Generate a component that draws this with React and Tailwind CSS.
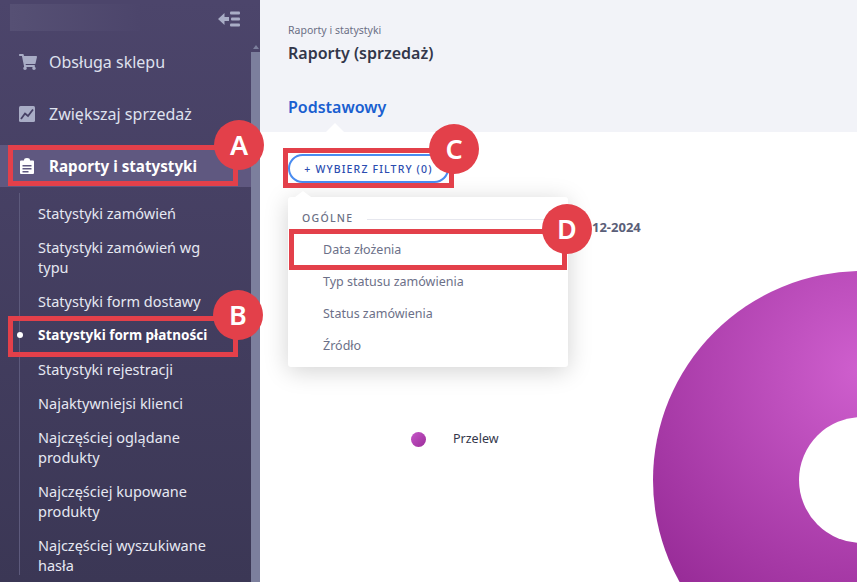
import React from 'react';
import { FaShoppingCart } from 'react-icons/fa';

const subItems = [
  { label: 'Statystyki zamówień' },
  { label: 'Statystyki zamówień wg typu' },
  { label: 'Statystyki form dostawy' },
  { label: 'Statystyki form płatności', active: true },
  { label: 'Statystyki rejestracji' },
  { label: 'Najaktywniejsi klienci' },
  { label: 'Najczęściej oglądane produkty' },
  { label: 'Najczęściej kupowane produkty' },
  { label: 'Najczęściej wyszukiwane hasła' },
];

const filters = ['Data złożenia', 'Typ statusu zamówienia', 'Status zamówienia', 'Źródło'];

const CollapseIcon = () => (
  <svg width="22" height="16" viewBox="0 0 22 16" fill="#a9adc6">
    <path d="M0 8 L6.5 2 V6 H11 V10 H6.5 V14 Z" />
    <rect x="12" y="0.5" width="10" height="3" rx="1" />
    <rect x="13" y="6.5" width="9" height="3" rx="1" />
    <rect x="12" y="12.5" width="10" height="3" rx="1" />
  </svg>
);

const TrendIcon = () => (
  <svg width="16" height="16" viewBox="0 0 16 16">
    <rect width="16" height="16" rx="1.5" fill="#a9adc6" />
    <path d="M2 13 L6 7.5 L9 10 L14 3.5" fill="none" stroke="#474166" strokeWidth="1.8" />
  </svg>
);

const ClipboardIcon = () => (
  <svg width="16" height="16" viewBox="0 0 16 16">
    <path d="M1 3.5 A1 1 0 0 1 2 2.5 H5 A3 2.4 0 0 1 11 2.5 H14 A1 1 0 0 1 15 3.5 V15 A1 1 0 0 1 14 16 H2 A1 1 0 0 1 1 15 Z" fill="#fff" />
    <rect x="3.5" y="7" width="9" height="1.5" fill="#5f5880" />
    <rect x="3.5" y="10" width="9" height="1.5" fill="#5f5880" />
    <rect x="3.5" y="13" width="6" height="1.5" fill="#5f5880" />
  </svg>
);

const Marker = ({ letter, className }) => (
  <div className={`absolute w-[50px] h-[50px] rounded-full bg-[#e3404a] text-white flex items-center justify-center text-[27px] font-semibold ${className}`}>
    {letter}
  </div>
);

const Box = ({ className }) => (
  <div className={`absolute border-[5px] border-[#e3404a] ${className}`} />
);

const App = () => {
  return (
    <div className="relative flex w-[857px] h-[582px] overflow-hidden bg-white text-[#33374a] font-['Noto_Sans','Open_Sans',sans-serif]">
      {/* Sidebar */}
      <aside className="relative w-[260px] h-full shrink-0 overflow-hidden bg-gradient-to-b from-[#4c456b] to-[#3b3755] text-[#dfe1ee]">
        <div className="flex items-start justify-between h-[36px] pl-[10px] pr-[20px] pt-[4px]">
          <div className="w-[130px] h-[27px] bg-gradient-to-r from-[#565074] to-[#4c456b]" />
          <div className="pt-[7px]"><CollapseIcon /></div>
        </div>

        <nav className="pr-[9px]">
          <div className="flex items-center h-[52px] pl-[19px] gap-[12px] text-[16px]">
            <FaShoppingCart className="w-[18px] h-[16px] text-[#a9adc6]" />
            <span>Obsługa sklepu</span>
          </div>
          <div className="flex items-center h-[52px] pl-[19px] gap-[14px] text-[16px]">
            <TrendIcon />
            <span>Zwiększaj sprzedaż</span>
          </div>
          <div className="flex items-center h-[42px] mt-[5px] mb-[5px] pl-[19px] gap-[14px] text-[15.2px] font-bold text-white bg-[#5f5880]">
            <ClipboardIcon />
            <span>Raporty i statystyki</span>
          </div>

          <ul className="relative ml-[19px] mt-[6px] pt-[10px] pl-[18px] pr-[20px] flex flex-col gap-[14px] border-l border-[#5d5a7c] text-[14.5px] leading-[20px] text-[#e6e8f2]">
            {subItems.map((item) => (
              <li key={item.label} className={`relative ${item.active ? 'font-bold text-[13.5px] text-white' : ''}`}>
                {item.active && (
                  <span className="absolute left-[-21px] top-[7px] w-[6px] h-[6px] rounded-full bg-white" />
                )}
                {item.label}
              </li>
            ))}
          </ul>
        </nav>

        {/* scrollbar */}
        <div className="absolute right-0 top-[45px] bottom-0 w-[9px] flex flex-col items-center">
          <div className="w-0 h-0 border-x-[3px] border-x-transparent border-b-[4px] border-b-[#7c7f9d]" />
          <div className="w-full flex-1 mt-[3px] bg-[#7c7f9d]" />
        </div>
      </aside>

      {/* Main */}
      <main className="relative flex-1 flex flex-col">
        <header className="relative h-[132px] shrink-0 bg-[#f2f3f8] pl-[28px] pt-[22px]">
          <div className="text-[10.5px] leading-[16px] text-[#6b6f85]">Raporty i statystyki</div>
          <h1 className="mt-[4px] text-[16px] leading-[22px] font-semibold text-[#33374a]">Raporty (sprzedaż)</h1>
          <div className="mt-[32px] text-[16px] leading-[22px] font-semibold text-[#1a5fd0]">Podstawowy</div>
          <div className="absolute left-[66px] bottom-0 w-0 h-0 border-x-[9px] border-x-transparent border-b-[9px] border-b-white" />
        </header>

        <section className="relative flex-1 pl-[28px] pt-[22px]">
          <button className="flex items-center justify-center w-[161px] h-[29px] pt-[2px] rounded-full border-2 border-[#4a8cf0] bg-white text-[10.5px] font-medium tracking-[0.11em] text-[#2b4cb0]">
            + WYBIERZ FILTRY (0)
          </button>

          <div className="absolute left-[332px] top-[86px] text-[13px] font-bold text-[#5a5e78]">12-2024</div>

          <div className="absolute left-[151px] top-[298px] flex items-center gap-[27px]">
            <span className="w-[15px] h-[15px] rounded-full bg-gradient-to-br from-[#c657c9] to-[#9c2c9a]" />
            <span className="text-[12.5px] text-[#33374a]">Przelew</span>
          </div>

          {/* pie chart */}
          <svg className="absolute left-[393px] top-[139px]" width="204" height="311" viewBox="653 271 204 311">
            <defs>
              <radialGradient id="pie" gradientUnits="userSpaceOnUse" cx="862" cy="370" r="290">
                <stop offset="0" stopColor="#cf5fce" />
                <stop offset="1" stopColor="#962a96" />
              </radialGradient>
            </defs>
            <circle cx="862" cy="480" r="209" fill="url(#pie)" />
            <circle cx="862" cy="480" r="63" fill="#fff" />
          </svg>

          {/* filter dropdown */}
          <div className="absolute left-[28px] top-[65px] w-[280px] h-[170px] bg-white rounded-[3px] shadow-[0_4px_24px_rgba(0,0,0,0.18)]">
            <div className="absolute left-[7px] top-[-6px] w-0 h-0 border-x-[8px] border-x-transparent border-b-[6px] border-b-white" />
            <div className="flex items-center h-[16px] mt-[14px] pl-[14px] pr-[13px] gap-[14px]">
              <span className="text-[10.5px] font-medium tracking-[0.12em] text-[#6b6f85]">OGÓLNE</span>
              <span className="flex-1 h-px bg-[#e6e7ee]" />
            </div>
            <ul className="mt-[7px] pl-[35px] text-[12.5px] text-[#6c7088]">
              {filters.map((f) => (
                <li key={f} className="h-[32px] flex items-center">{f}</li>
              ))}
            </ul>
          </div>
        </section>
      </main>

      {/* Annotations */}
      <Box className="left-[8px] top-[145px] w-[230px] h-[41px]" />
      <Marker letter="A" className="left-[214px] top-[120px]" />
      <Box className="left-[8px] top-[316px] w-[230px] h-[41px]" />
      <Marker letter="B" className="left-[213px] top-[290px]" />
      <Box className="left-[283px] top-[148px] w-[171px] h-[40px]" />
      <Marker letter="C" className="left-[429px] top-[124px]" />
      <Box className="left-[289px] top-[229px] w-[278px] h-[41px]" />
      <Marker letter="D" className="left-[542px] top-[204px]" />
    </div>
  );
};

export default App;
